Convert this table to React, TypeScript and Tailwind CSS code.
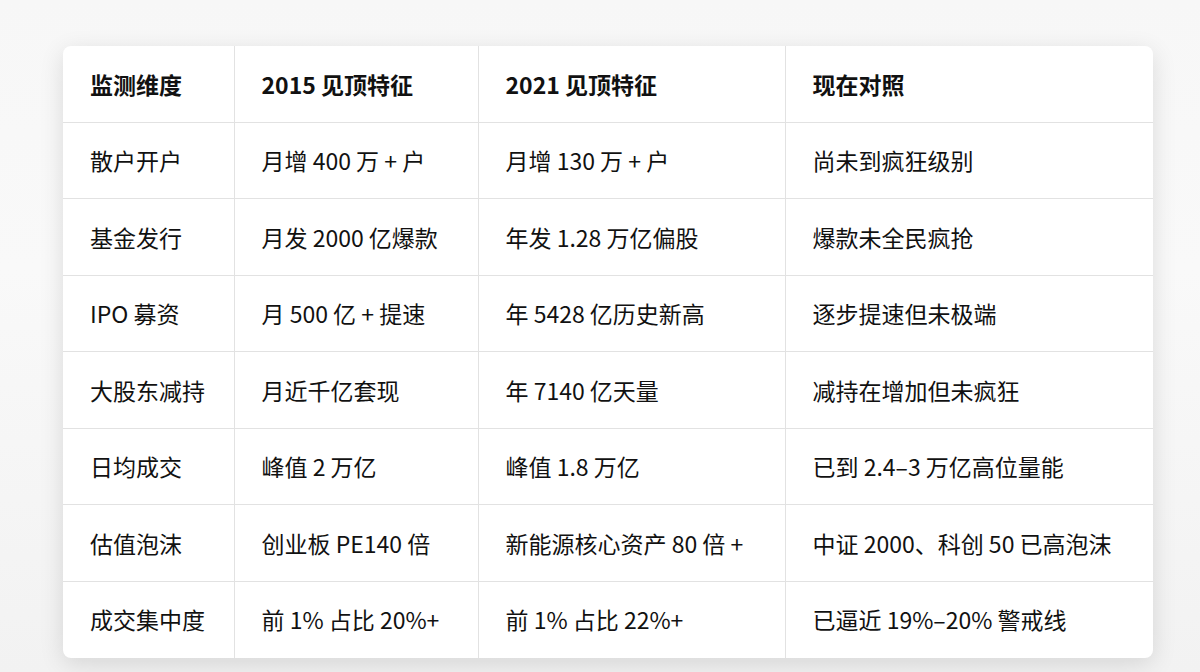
const headers = ["监测维度", "2015 见顶特征", "2021 见顶特征", "现在对照"];

const rows = [
  ["散户开户", "月增 400 万 + 户", "月增 130 万 + 户", "尚未到疯狂级别"],
  ["基金发行", "月发 2000 亿爆款", "年发 1.28 万亿偏股", "爆款未全民疯抢"],
  ["IPO 募资", "月 500 亿 + 提速", "年 5428 亿历史新高", "逐步提速但未极端"],
  ["大股东减持", "月近千亿套现", "年 7140 亿天量", "减持在增加但未疯狂"],
  ["日均成交", "峰值 2 万亿", "峰值 1.8 万亿", "已到 2.4–3 万亿高位量能"],
  ["估值泡沫", "创业板 PE140 倍", "新能源核心资产 80 倍 +", "中证 2000、科创 50 已高泡沫"],
  ["成交集中度", "前 1% 占比 20%+", "前 1% 占比 22%+", "已逼近 19%–20% 警戒线"],
];

const colW = ["w-[171px]", "w-[244px]", "w-[307px]", "w-[368px]"];

export default function App() {
  return (
    <div
      className="h-[672px] w-[1200px] overflow-hidden bg-[linear-gradient(180deg,#f7f7f7_0%,#f9f9f9_40%,#f2f2f2_100%)] pl-[63px] pt-[46px] text-[#111111]"
      style={{ fontFamily: '"Noto Sans CJK SC", "Noto Sans", sans-serif' }}
    >
      <div className="w-[1090px] overflow-hidden rounded-lg bg-white shadow-[0_6px_24px_rgba(0,0,0,0.12)]">
        <table className="w-full border-collapse text-[23px]">
          <thead>
            <tr className="h-[76px]">
              {headers.map((h, i) => (
                <th
                  key={h}
                  className={`${colW[i]} border-[#e2e2e2] pl-[27px] text-left font-bold ${i > 0 ? "border-l" : ""}`}
                >
                  {h}
                </th>
              ))}
            </tr>
          </thead>
          <tbody>
            {rows.map((r) => (
              <tr key={r[0]} className="h-[76.5px] border-t border-[#e2e2e2]">
                {r.map((c, i) => (
                  <td
                    key={i}
                    className={`border-[#e2e2e2] pl-[27px] text-left ${i > 0 ? "border-l" : ""}`}
                  >
                    {c}
                  </td>
                ))}
              </tr>
            ))}
          </tbody>
        </table>
      </div>
    </div>
  );
}
